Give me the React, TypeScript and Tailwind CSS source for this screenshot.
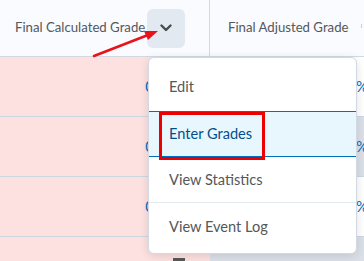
const rows = [
      { shade: false },
      { shade: true },
      { shade: false },
      { shade: true },
]

const menuItems = ['Edit', 'Enter Grades', 'View Statistics', 'View Event Log']

const itemClass = [
      'h-[53px] flex items-center pl-[20px] pt-[5px] text-[14.6px]',
      'h-[46px] flex items-center pl-[20px] bg-[#e8f6fd] text-[#004f8c] text-[14.6px] border-y border-[#006fbf]',
      'h-[46px] flex items-center pl-[20px] text-[14.6px] border-b border-[#e3e9f1]',
      'h-[50px] flex items-center pl-[20px] pb-[3px] text-[14.6px]',
]

export default function App() {
      return (
            <div
                  className="relative w-[364px] h-[261px] overflow-hidden bg-white text-[#54585a]"
                  style={{ fontFamily: 'Lato, "Open Sans", sans-serif' }}
            >
                  {/* header */}
                  <div className="flex h-[57px] bg-[#f9fbff] border-b border-[#d3d9e3]">
                        <div className="w-[210px] flex items-center justify-between pl-[15px] pr-[24px] border-r border-[#d3d9e3]">
                              <span className="text-[13.2px]">Final Calculated Grade</span>
                              <div className="w-[38px] h-[39px] rounded-md bg-[#e3e9f1] flex items-center justify-center">
                                    <svg width="12" height="8" viewBox="0 0 12 8">
                                          <path d="M1.5 1.5 L6 6 L10.5 1.5" fill="none" stroke="#494c4e" strokeWidth="2.4" strokeLinecap="round" strokeLinejoin="round" />
                                    </svg>
                              </div>
                        </div>
                        <div className="flex-1 flex items-center pl-[18px] relative">
                              <span className="text-[13.2px]">Final Adjusted Grade</span>
                              <span className="absolute right-[2px] top-[24px] w-px h-[4px] bg-[#c9cfd6]" />
                        </div>
                  </div>

                  {/* rows */}
                  {rows.map((r, i) => (
                        <div key={i} className="flex h-[60px] border-b border-[#cdd7e1]">
                              <div className="w-[210px] bg-[#fde1e1] flex items-center justify-end pr-[56px] text-[#006fbf] text-[15px]">
                                    0
                              </div>
                              <div className={`flex-1 flex items-center justify-end text-[#006fbf] text-[15px] ${r.shade ? 'bg-[#dbe0e8]' : 'bg-white'}`}>
                                    <span className="mr-[-4px]">%</span>
                              </div>
                        </div>
                  ))}

                  {/* dropdown menu */}
                  <div className="absolute left-[148px] top-[57px] w-[209px] bg-white rounded-md border border-[#d3d9e3] shadow-[0_2px_10px_rgba(0,0,0,0.12)] overflow-hidden">
                        {menuItems.map((label, i) => (
                              <div key={label} className={itemClass[i]}>
                                    {label}
                              </div>
                        ))}
                  </div>

                  {/* red highlight box */}
                  <div className="absolute left-[159px] top-[112px] w-[106px] h-[48px] border-[3px] border-[#ee0000]" />

                  {/* red arrow */}
                  <svg className="absolute left-0 top-0" width="364" height="261">
                        <line x1="94" y1="56" x2="148" y2="35" stroke="#e8141a" strokeWidth="2.6" strokeLinecap="round" />
                        <polygon points="158,31 144,31 148,40" fill="#e8141a" />
                  </svg>

                  <div className="absolute left-[173px] top-[258px] w-[12px] h-[3px] bg-[#555]" />
            </div>
      )
}
